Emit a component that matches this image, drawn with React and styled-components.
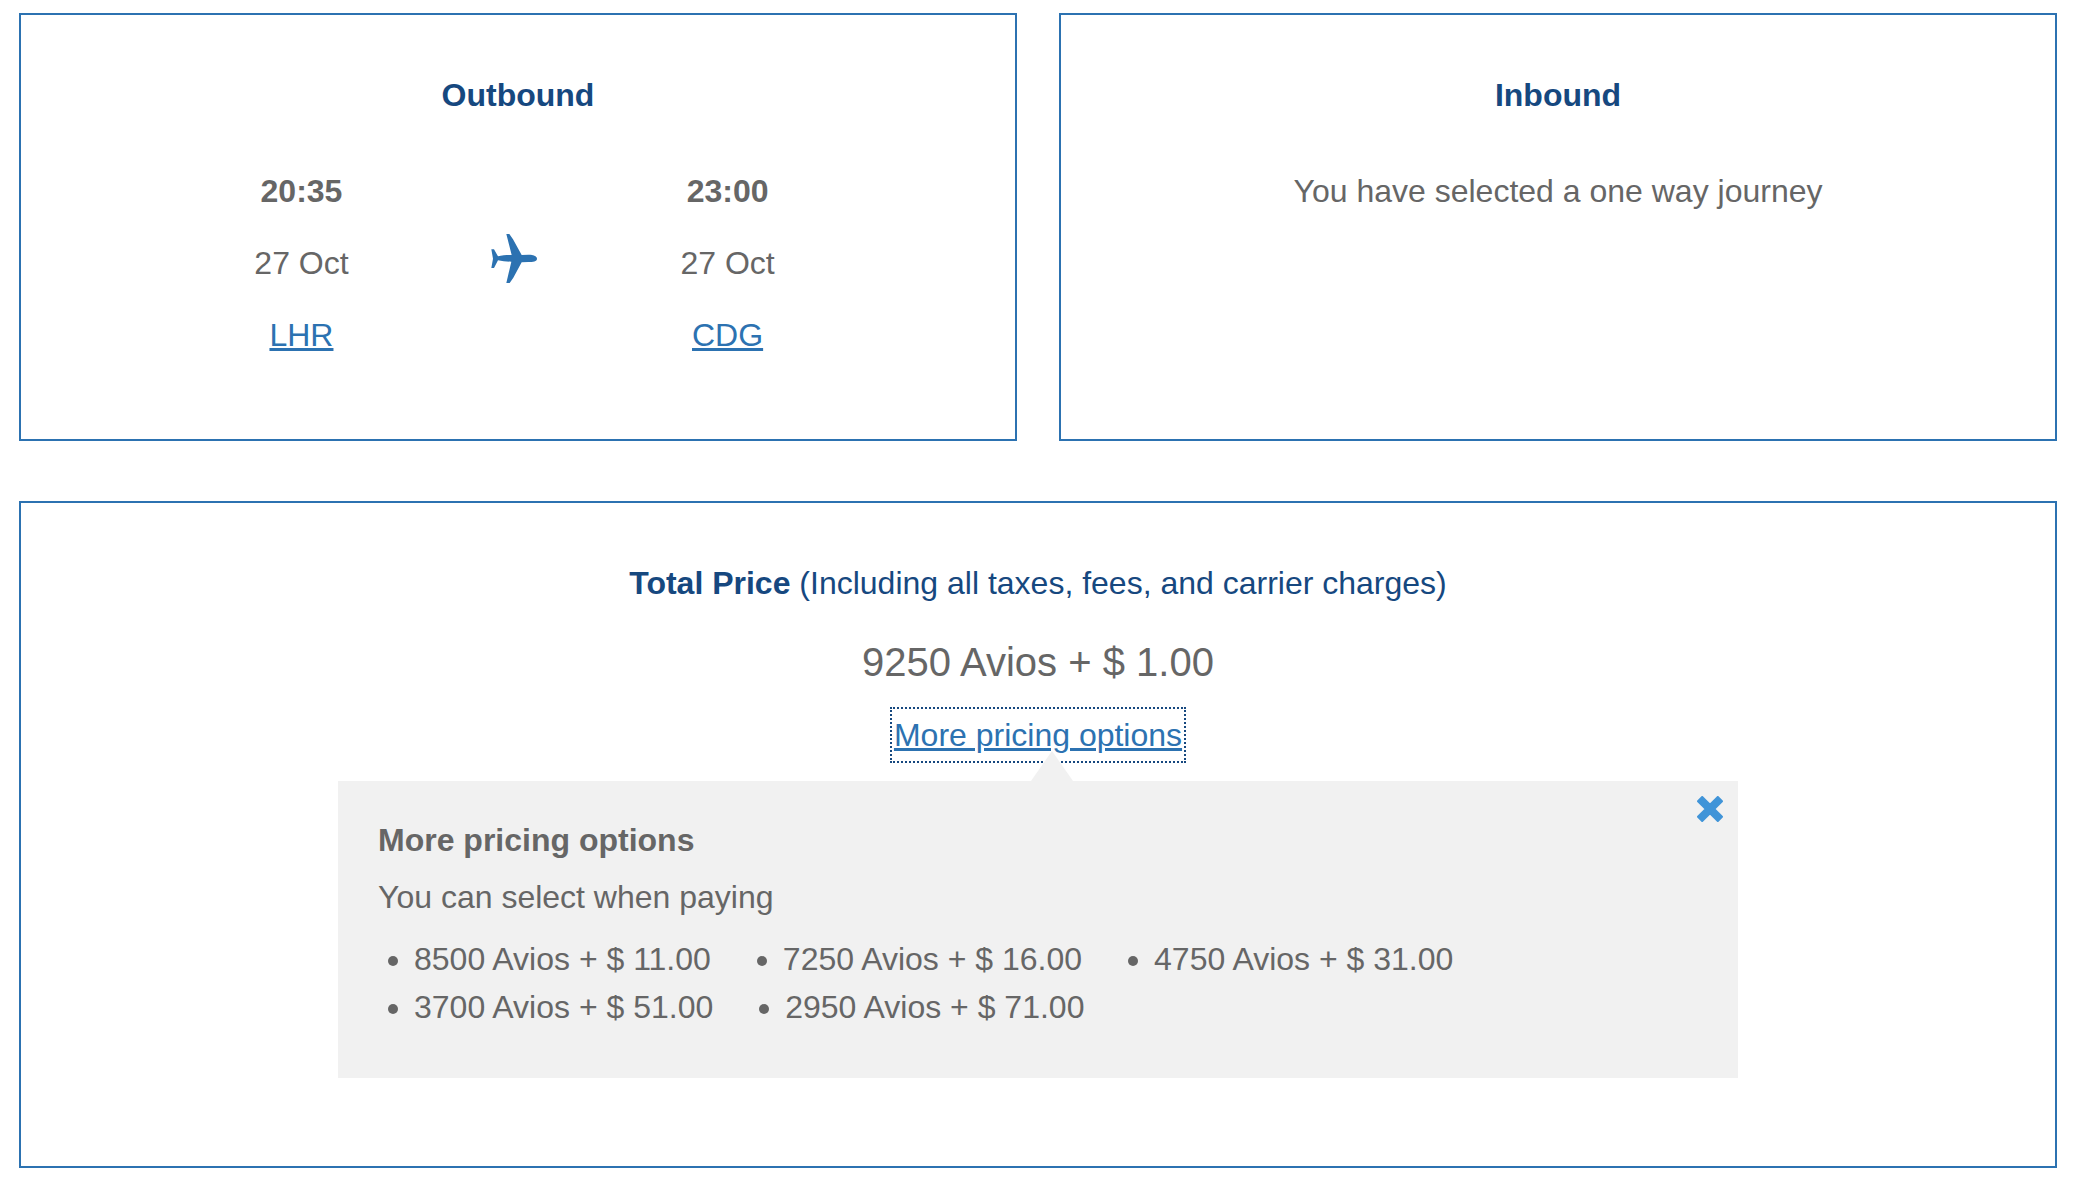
import React, { useState } from "react";
import styled, { createGlobalStyle, css, ThemeProvider } from "styled-components";

const theme = {
  blue: "#2c72b1",
  navy: "#16487f",
  lightBlue: "#4094d8",
  text: "#666666",
  backgroundSecondary: "#f1f1f1",
};

const GlobalStyle = createGlobalStyle`
  *, *::before, *::after {
    box-sizing: border-box;
  }

  body {
    margin: 0;
    background-color: #ffffff;
    color: ${({ theme }) => theme.text};
    font-family: "Liberation Sans", Arial, sans-serif;
    font-size: 32px;
    line-height: 48px;
  }
`;

const Page = styled.main`
  display: grid;
  grid-template-columns: 1fr 1fr;
  gap: 60px 42px;
  padding: 13px 23px 12px 19px;
`;

const Panel = styled.section`
  display: flex;
  flex-flow: column nowrap;
  align-items: center;
  padding: 56px 0 80px;
  border: 2px solid ${({ theme }) => theme.blue};
  text-align: center;

  ${({ $wide }) =>
    $wide &&
    css`
      grid-column: 1 / -1;
      padding-bottom: 88px;
    `};
`;

const Heading = styled.h2`
  margin: 0;
  color: ${({ theme }) => theme.navy};
  font-size: 32px;
  font-weight: 700;
`;

const Note = styled.span`
  font-weight: 400;
`;

const Paragraph = styled.p`
  margin: 0;
`;

const Message = styled(Paragraph)`
  margin-top: 48px;
`;

const Flight = styled.div`
  display: grid;
  grid-template-columns: 1fr 1fr 1fr;
  align-items: center;
  justify-items: center;
  width: 100%;
  margin-top: 48px;
  padding: 0 18.2% 0 17.5%;
`;

const Stop = styled.div`
  display: flex;
  flex-flow: column nowrap;
  gap: 24px;
`;

const Time = styled.strong`
  font-weight: 700;
`;

const linkStyles = css`
  color: ${({ theme }) => theme.blue};
  text-decoration: underline;
  text-decoration-thickness: 3px;
  text-underline-offset: 2px;
`;

const AirportLink = styled.a`
  ${linkStyles}
`;

const PlaneIcon = styled.svg`
  width: 46px;
  height: 49px;
  margin: 0 2px 9px 0;
  fill: ${({ theme }) => theme.blue};
`;

const Price = styled(Paragraph)`
  margin: 24px 0 18px;
  font-size: 40px;
  line-height: 62px;
`;

const OptionsToggle = styled.button`
  padding: 0;
  border: none;
  background: none;
  font: inherit;
  cursor: pointer;
  outline: 2px dotted ${({ theme }) => theme.navy};
  outline-offset: 2px;
  ${linkStyles}
`;

const Popup = styled.div`
  position: relative;
  width: 100%;
  max-width: 1400px;
  margin-top: 22px;
  padding: 35px 40px 47px;
  background-color: ${({ theme }) => theme.backgroundSecondary};
  text-align: left;

  &::before {
    content: "";
    position: absolute;
    bottom: 100%;
    left: calc(50% - 7px);
    border: solid transparent;
    border-width: 0 21px 30px;
    border-bottom-color: ${({ theme }) => theme.backgroundSecondary};
  }
`;

const PopupTitle = styled.h3`
  margin: 0 0 9px;
  font-size: 32px;
  font-weight: 700;
`;

const CloseButton = styled.button`
  position: absolute;
  top: 15px;
  right: 15px;
  display: flex;
  padding: 0;
  border: none;
  background: none;
  color: ${({ theme }) => theme.lightBlue};
  cursor: pointer;
`;

const List = styled.ul`
  display: flex;
  flex-flow: row wrap;
  column-gap: 36px;
  margin: 14px 0 0;
  padding: 0;
`;

const ListItem = styled.li`
  margin-left: 36px;
`;

const pricingOptions = [
  { avios: 8500, cash: "11.00" },
  { avios: 7250, cash: "16.00" },
  { avios: 4750, cash: "31.00" },
  { avios: 3700, cash: "51.00" },
  { avios: 2950, cash: "71.00" },
];

function FlightStop({ time, date, airport }) {
  return (
    <Stop>
      <Time>{time}</Time>
      <span>{date}</span>
      <AirportLink href={`#${airport}`}>{airport}</AirportLink>
    </Stop>
  );
}

function Plane() {
  return (
    <PlaneIcon viewBox="0 0 138 147" aria-hidden="true">
      <path d="M46 0h9l11 16 26 47 20-1c14 0 26 4 26 12s-12 10-26 10l-20 1-25 46-11 16H46l15-64c-14 0-28-1-40-4L9 102H1l5-28L1 46h8l12 21c12-3 26-4 41-4z" />
    </PlaneIcon>
  );
}

function App() {
  const [isOpen, setIsOpen] = useState(true);

  return (
    <ThemeProvider theme={theme}>
      <GlobalStyle />
      <Page>
        <Panel>
          <Heading>Outbound</Heading>
          <Flight>
            <FlightStop time="20:35" date="27 Oct" airport="LHR" />
            <Plane />
            <FlightStop time="23:00" date="27 Oct" airport="CDG" />
          </Flight>
        </Panel>
        <Panel>
          <Heading>Inbound</Heading>
          <Message>You have selected a one way journey</Message>
        </Panel>
        <Panel $wide>
          <Heading>
            Total Price <Note>(Including all taxes, fees, and carrier charges)</Note>
          </Heading>
          <Price>9250 Avios + $ 1.00</Price>
          <OptionsToggle
            type="button"
            aria-expanded={isOpen}
            onClick={() => setIsOpen(!isOpen)}
          >
            More pricing options
          </OptionsToggle>
          {isOpen && (
            <Popup>
              <CloseButton
                type="button"
                aria-label="Close"
                onClick={() => setIsOpen(false)}
              >
                <svg width="26" height="26" viewBox="0 0 26 26" aria-hidden="true">
                  <path
                    d="M13 8.8 20.8 1 25 5.2 17.2 13 25 20.8 20.8 25 13 17.2 5.2 25 1 20.8 8.8 13 1 5.2 5.2 1z"
                    fill="currentColor"
                    stroke="currentColor"
                    strokeWidth="2"
                    strokeLinejoin="round"
                  />
                </svg>
              </CloseButton>
              <PopupTitle>More pricing options</PopupTitle>
              <Paragraph>You can select when paying</Paragraph>
              <List>
                {pricingOptions.map(({ avios, cash }) => (
                  <ListItem key={avios}>
                    {avios} Avios + $ {cash}
                  </ListItem>
                ))}
              </List>
            </Popup>
          )}
        </Panel>
      </Page>
    </ThemeProvider>
  );
}

export default App;
